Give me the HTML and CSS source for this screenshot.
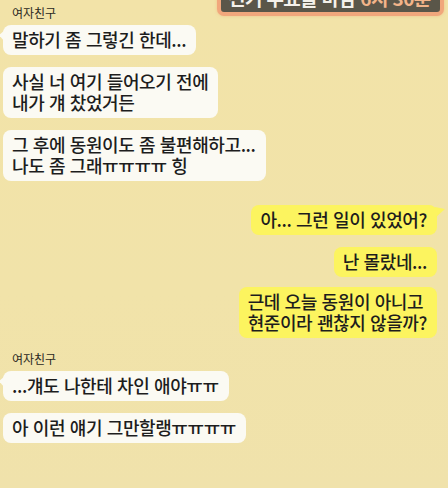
FILE: index.html
```html
<!DOCTYPE html>
<html lang="ko">
<head>
    <meta charset="UTF-8">
    <meta name="viewport" content="width=device-width, initial-scale=1.0">
    <title>채팅</title>
    <link rel="stylesheet" href="styles.css">
</head>
<body>

    <div class="caption">
        <span class="caption-text">선거 투표율 마감 <em>6시 30분</em></span>
    </div>

    <div class="chat">
        <div class="group left">
            <div class="name">여자친구</div>
            <div class="bubble tail">말하기 좀 그렇긴 한데...</div>
            <div class="bubble">사실 너 여기 들어오기 전에<br>내가 걔 찼었거든</div>
            <div class="bubble">그 후에 동원이도 좀 불편해하고...<br>나도 좀 그래ㅠㅠㅠㅠ 힝</div>
        </div>

        <div class="group right">
            <div class="bubble tail">아... 그런 일이 있었어?</div>
            <div class="bubble">난 몰랐네...</div>
            <div class="bubble last">근데 오늘 동원이 아니고<br>현준이라 괜찮지 않을까?</div>
        </div>

        <div class="group left">
            <div class="name">여자친구</div>
            <div class="bubble tail">...걔도 나한테 차인 애야ㅠㅠ</div>
            <div class="bubble">아 이런 얘기 그만할랭ㅠㅠㅠㅠ</div>
        </div>
    </div>

</body>
</html>
```

FILE: styles.css
```css
body {
    margin: 0;
    width: 448px;
    height: 488px;
    overflow: hidden;
    background: linear-gradient(180deg, #f2e3a8 0%, #f1e3a9 60%, #f0e2ab 100%);
    font-family: "Noto Sans CJK KR", "Noto Sans", sans-serif;
    color: #1d1d1d;
    position: relative;
}

/* caption box cut off at the top of the frame */
.caption {
    position: absolute;
    left: 217px;
    top: -21px;
    width: 219px;
    height: 29px;
    background: #5a5649;
    border: 4px solid #f1a77c;
    border-radius: 7px;
    box-shadow: 0 0 3px rgba(240, 160, 110, 0.5);
    overflow: hidden;
}
.caption-text {
    display: block;
    padding-left: 7px;
    margin-top: 4px;
    font-size: 19px;
    line-height: 22px;
    font-weight: bold;
    letter-spacing: -0.6px;
    color: #f4f1ea;
    white-space: nowrap;
}
.caption-text em {
    font-style: normal;
    color: #f2b489;
}

.chat {
    display: flex;
    flex-direction: column;
    padding: 6px 11px 0 3px;
}

.group {
    display: flex;
    flex-direction: column;
    gap: 12px;
}
.group.left {
    align-items: flex-start;
}
.group.right {
    align-items: flex-end;
    margin-top: 24px;
}
.group.right .last {
    margin-top: -2px;
}
.group.right + .group.left {
    margin-top: 14px;
}

.name {
    font-size: 12px;
    line-height: 14px;
    padding-left: 9px;
    margin-bottom: -7px;
    color: #2a2822;
}

.bubble {
    position: relative;
    font-size: 18px;
    font-weight: 500;
    line-height: 21px;
    letter-spacing: -0.4px;
    padding: 4px 10px 5px 9px;
    border-radius: 8px;
    white-space: nowrap;
}
.left .bubble {
    background: #fbfaf3;
}
.right .bubble {
    background: #fcf45f;
}

.bubble.tail::before {
    content: "";
    position: absolute;
    top: 5px;
    border-top: 5px solid transparent;
    border-bottom: 7px solid transparent;
}
.left .bubble.tail::before {
    left: -4px;
    border-right: 6px solid #fbfaf3;
}
.right .bubble.tail::before {
    right: -8px;
    border-left: 10px solid #fcf45f;
    border-top-width: 2px;
    border-bottom-width: 9px;
    top: 2px;
}
```
